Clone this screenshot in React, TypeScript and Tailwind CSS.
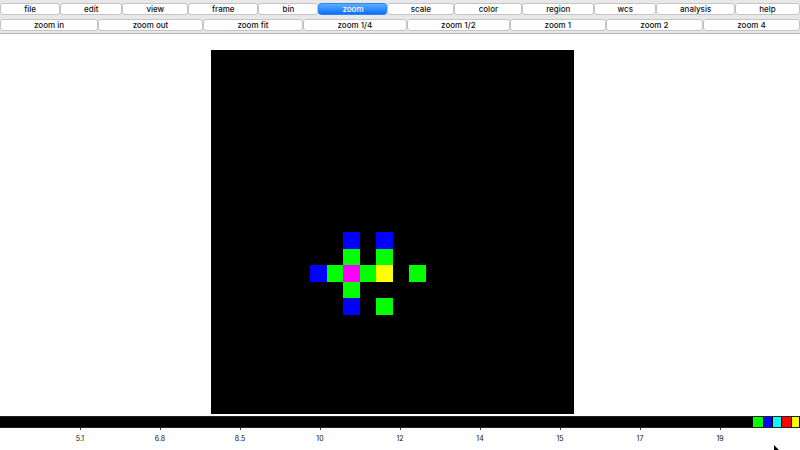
import clsx from "clsx";

type Item = { label: string; grow: string };

const menus: Item[] = [
  { label: "file", grow: "grow-60" },
  { label: "edit", grow: "grow-62" },
  { label: "view", grow: "grow-66" },
  { label: "frame", grow: "grow-70" },
  { label: "bin", grow: "grow-60" },
  { label: "zoom", grow: "grow-69" },
  { label: "scale", grow: "grow-67" },
  { label: "color", grow: "grow-68" },
  { label: "region", grow: "grow-72" },
  { label: "wcs", grow: "grow-62" },
  { label: "analysis", grow: "grow-79" },
  { label: "help", grow: "grow-65" },
];

const actions: Item[] = [
  { label: "zoom in", grow: "grow-98" },
  { label: "zoom out", grow: "grow-105" },
  { label: "zoom fit", grow: "grow-100" },
  { label: "zoom 1/4", grow: "grow-104" },
  { label: "zoom 1/2", grow: "grow-103" },
  { label: "zoom 1", grow: "grow-96" },
  { label: "zoom 2", grow: "grow-97" },
  { label: "zoom 4", grow: "grow-97" },
];

const BLUE = "#0000ff";
const GREEN = "#00ff00";
const MAGENTA = "#ff00ff";
const YELLOW = "#ffff00";

// [column, row, colour] on a 22 x 22 frame
const pixels: [number, number, string][] = [
  [8, 11, BLUE],
  [10, 11, BLUE],
  [8, 12, GREEN],
  [10, 12, GREEN],
  [6, 13, BLUE],
  [7, 13, GREEN],
  [8, 13, MAGENTA],
  [9, 13, GREEN],
  [10, 13, YELLOW],
  [12, 13, GREEN],
  [8, 14, GREEN],
  [8, 15, BLUE],
  [10, 15, GREEN],
];

const ticks = ["5.1", "6.8", "8.5", "10", "12", "14", "15", "17", "19"];

function ButtonRow({ items, active }: { items: Item[]; active?: string }) {
  return (
    <div className="flex">
      {items.map(({ label, grow }) => (
        <button
          key={label}
          type="button"
          className={clsx(
            "h-3 min-w-0 basis-0 rounded-[3px] border text-[8px] leading-[10px] font-medium",
            grow,
            label === active
              ? "border-[#2f86f0] bg-linear-to-b from-[#5aaefb] to-[#0a6cff] text-white"
              : "border-[#c4c4c4] bg-white text-[#111111]"
          )}
        >
          {label}
        </button>
      ))}
    </div>
  );
}

function Frame() {
  return (
    <svg
      viewBox="0 0 22 22"
      preserveAspectRatio="none"
      className="h-[364px] w-[363px]"
      shapeRendering="crispEdges"
      role="img"
      aria-label="image frame"
    >
      <rect width="22" height="22" fill="#000000" />
      {pixels.map(([x, y, fill]) => (
        <rect key={`${x}-${y}`} x={x} y={y} width="1" height="1" fill={fill} />
      ))}
    </svg>
  );
}

function Colorbar() {
  return (
    <div>
      <div className="flex h-3 justify-end border-y border-[#222222] bg-black">
        <span className="w-[10px] bg-[#00ff00]" />
        <span className="w-[9px] border-l border-black bg-[#0000ff]" />
        <span className="w-[9px] border-l border-black bg-[#00ffff]" />
        <span className="w-[10px] border-l border-black bg-[#ff0000]" />
        <span className="w-[9px] border-x border-black bg-[#ffff00]" />
      </div>
      <div className="flex px-[5%]">
        {ticks.map((tick) => (
          <div key={tick} className="flex flex-1 flex-col items-center">
            <span className="h-[2px] w-px bg-[#444444]" />
            <span className="mt-1 text-[7px] leading-[10px] text-[#111111]">{tick}</span>
          </div>
        ))}
      </div>
    </div>
  );
}

export default function App() {
  return (
    <div className="relative flex h-screen flex-col overflow-hidden bg-white font-['Inter',sans-serif]">
      <header className="flex flex-col gap-1 border-b border-[#b4b4b4] bg-[#e8e8e8] pt-[3px] pb-[2px]">
        <ButtonRow items={menus} active="zoom" />
        <ButtonRow items={actions} />
      </header>
      <main className="flex justify-center pt-4 pr-[15px] pb-[2px]">
        <Frame />
      </main>
      <Colorbar />
      <svg viewBox="0 0 10 16" className="absolute right-[17px] -bottom-[11px] h-4 w-[10px]" aria-hidden="true">
        <path d="M1 0v13l3-3 2 5 2-1-2-5h4z" fill="#000000" />
      </svg>
    </div>
  );
}
